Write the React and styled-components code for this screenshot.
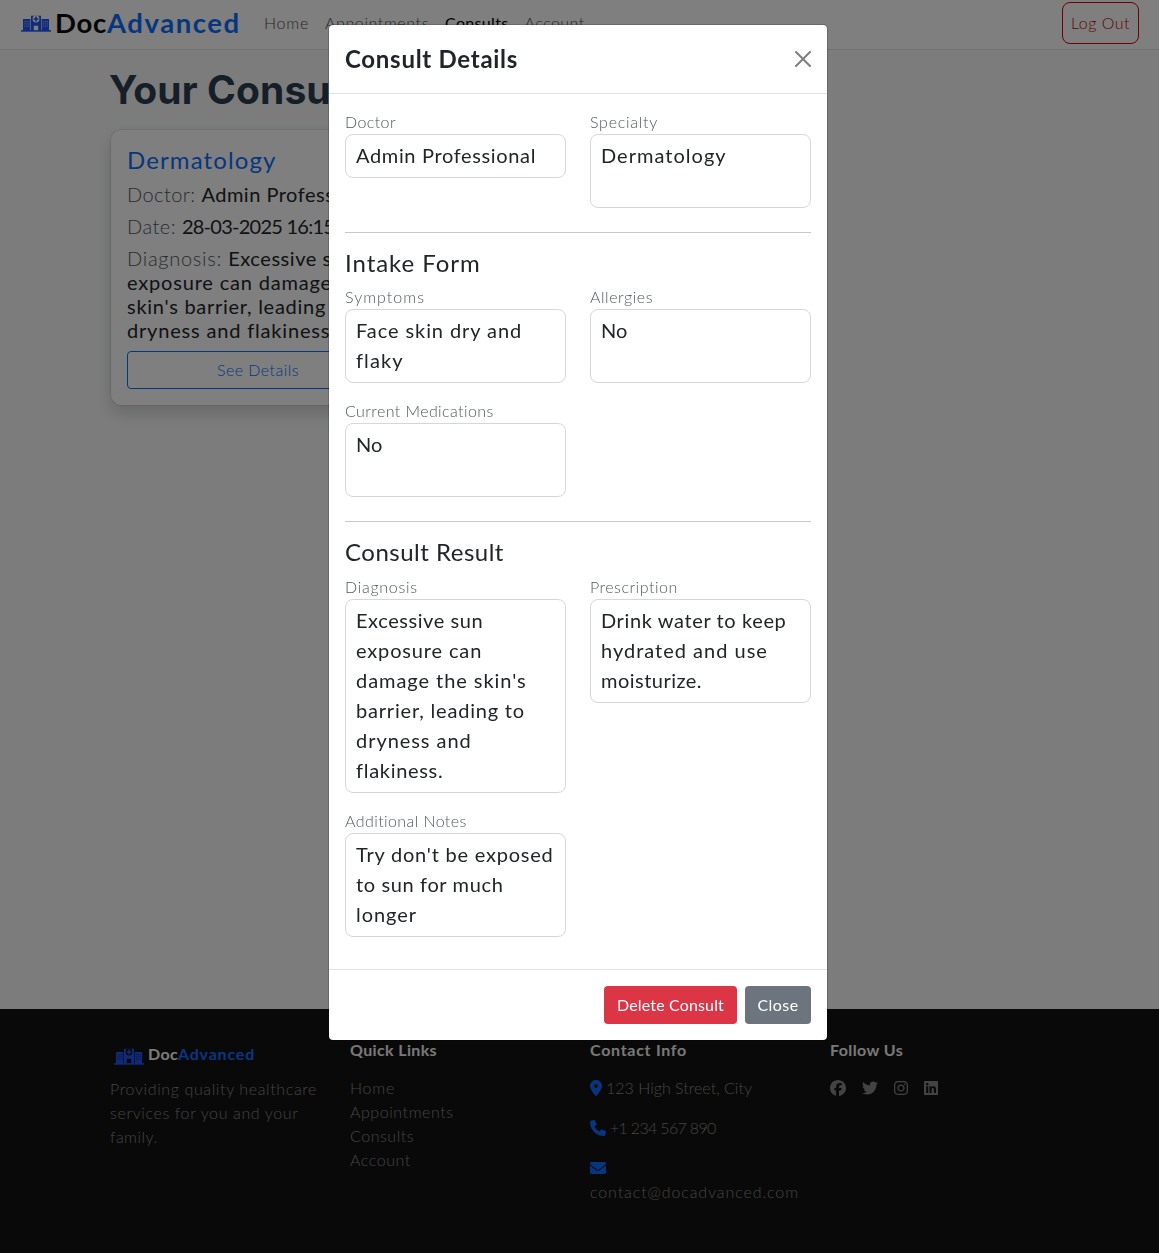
import React from 'react';
import styled, { createGlobalStyle } from 'styled-components';
import {
  FaLocationDot,
  FaPhone,
  FaEnvelope,
  FaFacebook,
  FaTwitter,
  FaInstagram,
  FaLinkedin,
} from 'react-icons/fa6';

const GlobalStyle = createGlobalStyle`
  *, *::before, *::after { box-sizing: border-box; }
  html, body { margin: 0; padding: 0; overflow: hidden; }
  body {
    background: #f8f9fa;
    color: #212529;
    font-family: Lato, "Liberation Sans", sans-serif;
    font-size: 16px;
    line-height: 1.5;
  }
  h1, h2, h4, h5, p, ul { margin: 0; padding: 0; font-weight: inherit; }
`;

const Text = styled.span`
  letter-spacing: ${({ $ls = 0 }) => $ls}px;
  white-space: pre;
`;

const Line = styled(Text)`
  display: block;
`;

const Page = styled.div`
  display: flex;
  flex-direction: column;
  height: 1253px;
`;

/* ---------- navigation ---------- */
const Navbar = styled.header`
  display: flex;
  align-items: center;
  height: 50px;
  padding: 0 20px 3px 21px;
  background: #fff;
  border-bottom: 1px solid #dcdfe2;
`;

const Brand = styled.a`
  display: flex;
  align-items: center;
  width: 235px;
  font-size: 27.5px;
  line-height: 42px;
  font-weight: 700;
  color: #0a0a0a;
`;

const BrandAccent = styled(Text)`
  color: #0d6efd;
`;

const LogoSvg = styled.svg`
  width: 30px;
  height: 17px;
  flex: none;
  margin-right: 4px;
`;

const NavLinks = styled.nav`
  display: flex;
  flex: 1;
`;

const NavLink = styled.a`
  padding: 0 8px;
  color: ${({ $active }) => ($active ? '#000' : '#48494a')};
  font-weight: ${({ $active }) => ($active ? 400 : 300)};
`;

const LogoutButton = styled.button`
  height: 42px;
  width: 77px;
  margin-bottom: 1px;
  padding: 0;
  border: 1px solid #dc0000;
  border-radius: 8px;
  background: transparent;
  color: #c40000;
  font: 300 16px/24px Lato, sans-serif;
`;

/* ---------- page content ---------- */
const Content = styled.main`
  flex: 1;
  padding: 16px 110px 0;
`;

const PageTitle = styled.h1`
  margin-left: -1px;
  font-family: Inter, "Liberation Sans", sans-serif;
  font-size: 39px;
  line-height: 48px;
  font-weight: 700;
  color: #2c3e50;
`;

const ConsultCard = styled.article`
  width: 296px;
  margin-top: 15px;
  padding: 15px 16px 16px;
  border: 1px solid rgba(0, 0, 0, 0.08);
  border-radius: 12px;
  background: #fff;
  box-shadow: 0 8px 16px rgba(0, 0, 0, 0.15);
  background-clip: padding-box;
`;

const CardTitle = styled.h4`
  font-size: 24px;
  line-height: 29px;
  color: #0d6efd;
  margin-bottom: 8px;
`;

const CardRow = styled.p`
  font-size: 20px;
  line-height: 24px;
  margin-bottom: 8px;
`;

const Muted = styled(Text)`
  color: #4f575e;
  font-weight: 300;
`;

const OutlineButton = styled.button`
  display: block;
  width: 100%;
  height: 38px;
  margin-top: 9px;
  border: 1px solid #0d6efd;
  border-radius: 4px;
  background: transparent;
  color: #0d6efd;
  font: 300 16px/24px Lato, sans-serif;
`;

/* ---------- footer ---------- */
const Footer = styled.footer`
  display: grid;
  grid-template-columns: repeat(4, 216px);
  column-gap: 24px;
  align-items: start;
  height: 244px;
  padding: 31px 0 0 110px;
  background: #121212;
  color: #8a8a8a;
  font-weight: 300;
`;

const FooterBrand = styled.div`
  display: flex;
  align-items: flex-start;
  padding: 2px 0 0 4px;
  margin-bottom: 11px;
  height: 26px;
  line-height: 24px;
  font-weight: 700;
  color: #f8f9fa;

  svg {
    margin-top: 6px;
  }
`;

const FooterHeading = styled.h5`
  font-size: 16px;
  line-height: 19px;
  font-weight: 700;
  color: #f0f0f0;
  margin-bottom: 17px;
`;

const FooterList = styled.ul`
  list-style: none;
`;

const ContactItem = styled.p`
  margin-bottom: 16px;

  svg {
    display: inline-block;
    width: ${({ $icon = 16 }) => $icon}px;
    height: 16px;
    margin-right: 4px;
    vertical-align: -2px;
    color: #0d6efd;
  }
`;

const Socials = styled.div`
  display: flex;
  align-items: center;
  gap: 16px;
  height: 24px;
  color: #868686;

  svg {
    width: 16px;
    height: 16px;
  }

  svg:nth-child(n + 3) {
    width: 14px;
  }
`;

/* ---------- modal ---------- */
const Backdrop = styled.div`
  position: fixed;
  inset: 0;
  display: flex;
  align-items: flex-start;
  padding: 24px 0 0 328px;
  background: rgba(0, 0, 0, 0.5);
`;

const Modal = styled.section`
  width: 500px;
  border: 1px solid rgba(0, 0, 0, 0.175);
  border-radius: 5px;
  background: #fff;
  background-clip: padding-box;
`;

const ModalHeader = styled.header`
  display: flex;
  align-items: center;
  justify-content: space-between;
  height: 69px;
  padding: 0 16px;
  border-bottom: 1px solid #dee2e6;
`;

const ModalTitle = styled.h2`
  margin-bottom: 1px;
  font-size: 24px;
  line-height: 36px;
  font-weight: 700;
`;

const CloseIcon = styled.svg`
  width: 16px;
  height: 16px;
  opacity: 0.5;
`;

const ModalBody = styled.div`
  padding: 16px 16px 32px;
`;

const FieldGrid = styled.div`
  display: grid;
  grid-template-columns: 1fr 1fr;
  gap: 16px 24px;
  align-items: start;
`;

const FieldLabel = styled.div`
  color: #4f585f;
  font-weight: 300;
  line-height: 24px;
`;

const FieldBox = styled.div`
  min-height: ${({ $min = 44 }) => $min}px;
  padding: 5px 10px 7px;
  border: 1px solid #d5d7d9;
  border-radius: 8px;
  font-size: 20px;
  line-height: 30px;
`;

const Divider = styled.div`
  height: 1px;
  margin: 24px 0 16px;
  background: #c7c8c9;
`;

const SectionTitle = styled.h4`
  font-size: 24px;
  line-height: 28.4px;
  margin-bottom: 8px;
`;

const ModalFooter = styled.footer`
  display: flex;
  justify-content: flex-end;
  gap: 8px;
  padding: 16px;
  border-top: 1px solid #dee2e6;
`;

const SolidButton = styled.button`
  width: ${({ $w }) => $w}px;
  height: 38px;
  padding: 0;
  border: 0;
  border-radius: 4px;
  background: ${({ $bg }) => $bg};
  color: #fff;
  font: 400 16px/24px Lato, sans-serif;
`;

function HospitalLogo({ hole }) {
  const windows = [];
  [3.4, 5.4, 7.4, 21.8, 23.8, 25.8].forEach((x) =>
    [6, 8.3, 10.6].forEach((y) => windows.push([x, y]))
  );
  return (
    <LogoSvg viewBox="0 0 30 17">
      <g fill="#2056f5">
        <rect x="0" y="15.2" width="30" height="1.5" />
        <rect x="2" y="4" width="7.4" height="12" />
        <rect x="20.6" y="4" width="7.4" height="12" />
        <path d="M10 0.800H20V16H17.200V10.800H12.800V16H10Z" />
      </g>
      <circle cx="15" cy="4" r="3.4" fill={hole} />
      <path d="M14.2 1.6h1.6v1.6h1.6v1.6h-1.6v1.6h-1.6V4.800h-1.600V3.200h1.600Z" fill="#2056f5" />
      {windows.map(([x, y]) => (
        <rect key={`${x}-${y}`} x={x} y={y} width="1" height="1.2" fill={hole} opacity="0.6" />
      ))}
    </LogoSvg>
  );
}

function Field({ label, ls, lines, min }) {
  return (
    <div>
      <FieldLabel>
        <Text $ls={ls}>{label}</Text>
      </FieldLabel>
      <FieldBox $min={min}>
        {lines.map(([text, spacing]) => (
          <Line key={text} $ls={spacing}>
            {text}
          </Line>
        ))}
      </FieldBox>
    </div>
  );
}

const NAV = [
  ['Home', 0.76],
  ['Appointments', 0.59],
  ['Consults', 0.34],
  ['Account', 0.44],
];

export default function App() {
  return (
    <>
      <GlobalStyle />
      <Page>
        <Navbar>
          <Brand>
            <HospitalLogo hole="#fff" />
            <Text $ls={0.7}>Doc</Text>
            <BrandAccent $ls={1.55}>Advanced</BrandAccent>
          </Brand>
          <NavLinks>
            {NAV.map(([name, ls]) => (
              <NavLink key={name} $active={name === 'Consults'}>
                <Text $ls={ls}>{name}</Text>
              </NavLink>
            ))}
          </NavLinks>
          <LogoutButton>
            <Text $ls={0.5}>Log Out</Text>
          </LogoutButton>
        </Navbar>

        <Content>
          <PageTitle>
            <Text $ls={0.1}>Your Consults</Text>
          </PageTitle>
          <ConsultCard>
            <CardTitle>
              <Text $ls={1.12}>Dermatology</Text>
            </CardTitle>
            <CardRow>
              <Muted $ls={0.43}>Doctor: </Muted>
              <Text $ls={0.5}>Admin Professional</Text>
            </CardRow>
            <CardRow>
              <Muted $ls={0.49}>Date: </Muted>
              <Text $ls={-0.75}>28-03-2025 16:15</Text>
            </CardRow>
            <CardRow>
              <Muted $ls={0.73}>Diagnosis: </Muted>
              <Text $ls={0.55}>Excessive sun</Text>
              <Line $ls={0.82}>exposure can damage the</Line>
              <Line $ls={0.73}>skin's barrier, leading to</Line>
              <Line $ls={0.82}>dryness and flakiness.</Line>
            </CardRow>
            <OutlineButton>
              <Text $ls={0.46}>See Details</Text>
            </OutlineButton>
          </ConsultCard>
        </Content>

        <Footer>
          <div>
            <FooterBrand>
              <HospitalLogo hole="#121212" />
              <Text $ls={0.34}>Doc</Text>
              <BrandAccent $ls={0.8}>Advanced</BrandAccent>
            </FooterBrand>
            <Line $ls={0.62}>Providing quality healthcare</Line>
            <Line $ls={0.62}>services for you and your</Line>
            <Line $ls={0.5}>family.</Line>
          </div>
          <div>
            <FooterHeading>
              <Text $ls={0.36}>Quick Links</Text>
            </FooterHeading>
            <FooterList>
              {NAV.map(([name, ls]) => (
                <li key={name}>
                  <Text $ls={name === 'Home' ? 0.76 : 0.5 + ls * 0.1}>{name}</Text>
                </li>
              ))}
            </FooterList>
          </div>
          <div>
            <FooterHeading>
              <Text $ls={0.72}>Contact Info</Text>
            </FooterHeading>
            <ContactItem $icon={12}>
              <FaLocationDot />
              <Text $ls={0.01}>123 High Street, City</Text>
            </ContactItem>
            <ContactItem>
              <FaPhone />
              <Text $ls={-0.68}>+1 234 567 890</Text>
            </ContactItem>
            <ContactItem>
              <FaEnvelope />
              <Line $ls={0.9}>contact@docadvanced.com</Line>
            </ContactItem>
          </div>
          <div>
            <FooterHeading>
              <Text $ls={0.4}>Follow Us</Text>
            </FooterHeading>
            <Socials>
              <FaFacebook />
              <FaTwitter />
              <FaInstagram />
              <FaLinkedin />
            </Socials>
          </div>
        </Footer>
      </Page>

      <Backdrop>
        <Modal>
          <ModalHeader>
            <ModalTitle>
              <Text $ls={0.72}>Consult Details</Text>
            </ModalTitle>
            <CloseIcon viewBox="0 0 16 16">
              <path
                d="M.293.293a1 1 0 0 1 1.414 0L8 6.586 14.293.293a1 1 0 1 1 1.414 1.414L9.414 8l6.293 6.293a1 1 0 0 1-1.414 1.414L8 9.414l-6.293 6.293a1 1 0 0 1-1.414-1.414L6.586 8 .293 1.707a1 1 0 0 1 0-1.414"
                fill="#000"
              />
            </CloseIcon>
          </ModalHeader>

          <ModalBody>
            <FieldGrid>
              <Field label="Doctor" ls={0.41} lines={[['Admin Professional', 0.65]]} />
              <Field label="Specialty" ls={0.73} min={74} lines={[['Dermatology', 1.03]]} />
            </FieldGrid>

            <Divider />
            <SectionTitle>
              <Text $ls={0.95}>Intake Form</Text>
            </SectionTitle>
            <FieldGrid>
              <Field
                label="Symptoms"
                ls={1.02}
                min={74}
                lines={[['Face skin dry and', 0.92], ['flaky', 1.1]]}
              />
              <Field label="Allergies" ls={0.55} min={74} lines={[['No', 0]]} />
              <Field label="Current Medications" ls={0.41} min={74} lines={[['No', 0]]} />
            </FieldGrid>

            <Divider />
            <SectionTitle>
              <Text $ls={0.5}>Consult Result</Text>
            </SectionTitle>
            <FieldGrid>
              <Field
                label="Diagnosis"
                ls={0.7}
                lines={[
                  ['Excessive sun', 0.57],
                  ['exposure can', 0.85],
                  ["damage the skin's", 0.94],
                  ['barrier, leading to', 0.81],
                  ['dryness and', 0.95],
                  ['flakiness.', 0.7],
                ]}
              />
              <Field
                label="Prescription"
                ls={0.5}
                lines={[
                  ['Drink water to keep', 0.62],
                  ['hydrated and use', 1],
                  ['moisturize.', 0.48],
                ]}
              />
              <Field
                label="Additional Notes"
                ls={0.41}
                lines={[
                  ["Try don't be exposed", 0.78],
                  ['to sun for much', 0.63],
                  ['longer', 0.95],
                ]}
              />
            </FieldGrid>
          </ModalBody>

          <ModalFooter>
            <SolidButton $w={133} $bg="#dc3545">
              <Text $ls={0.16}>Delete Consult</Text>
            </SolidButton>
            <SolidButton $w={66} $bg="#6c757d">
              <Text $ls={0.42}>Close</Text>
            </SolidButton>
          </ModalFooter>
        </Modal>
      </Backdrop>
    </>
  );
}
